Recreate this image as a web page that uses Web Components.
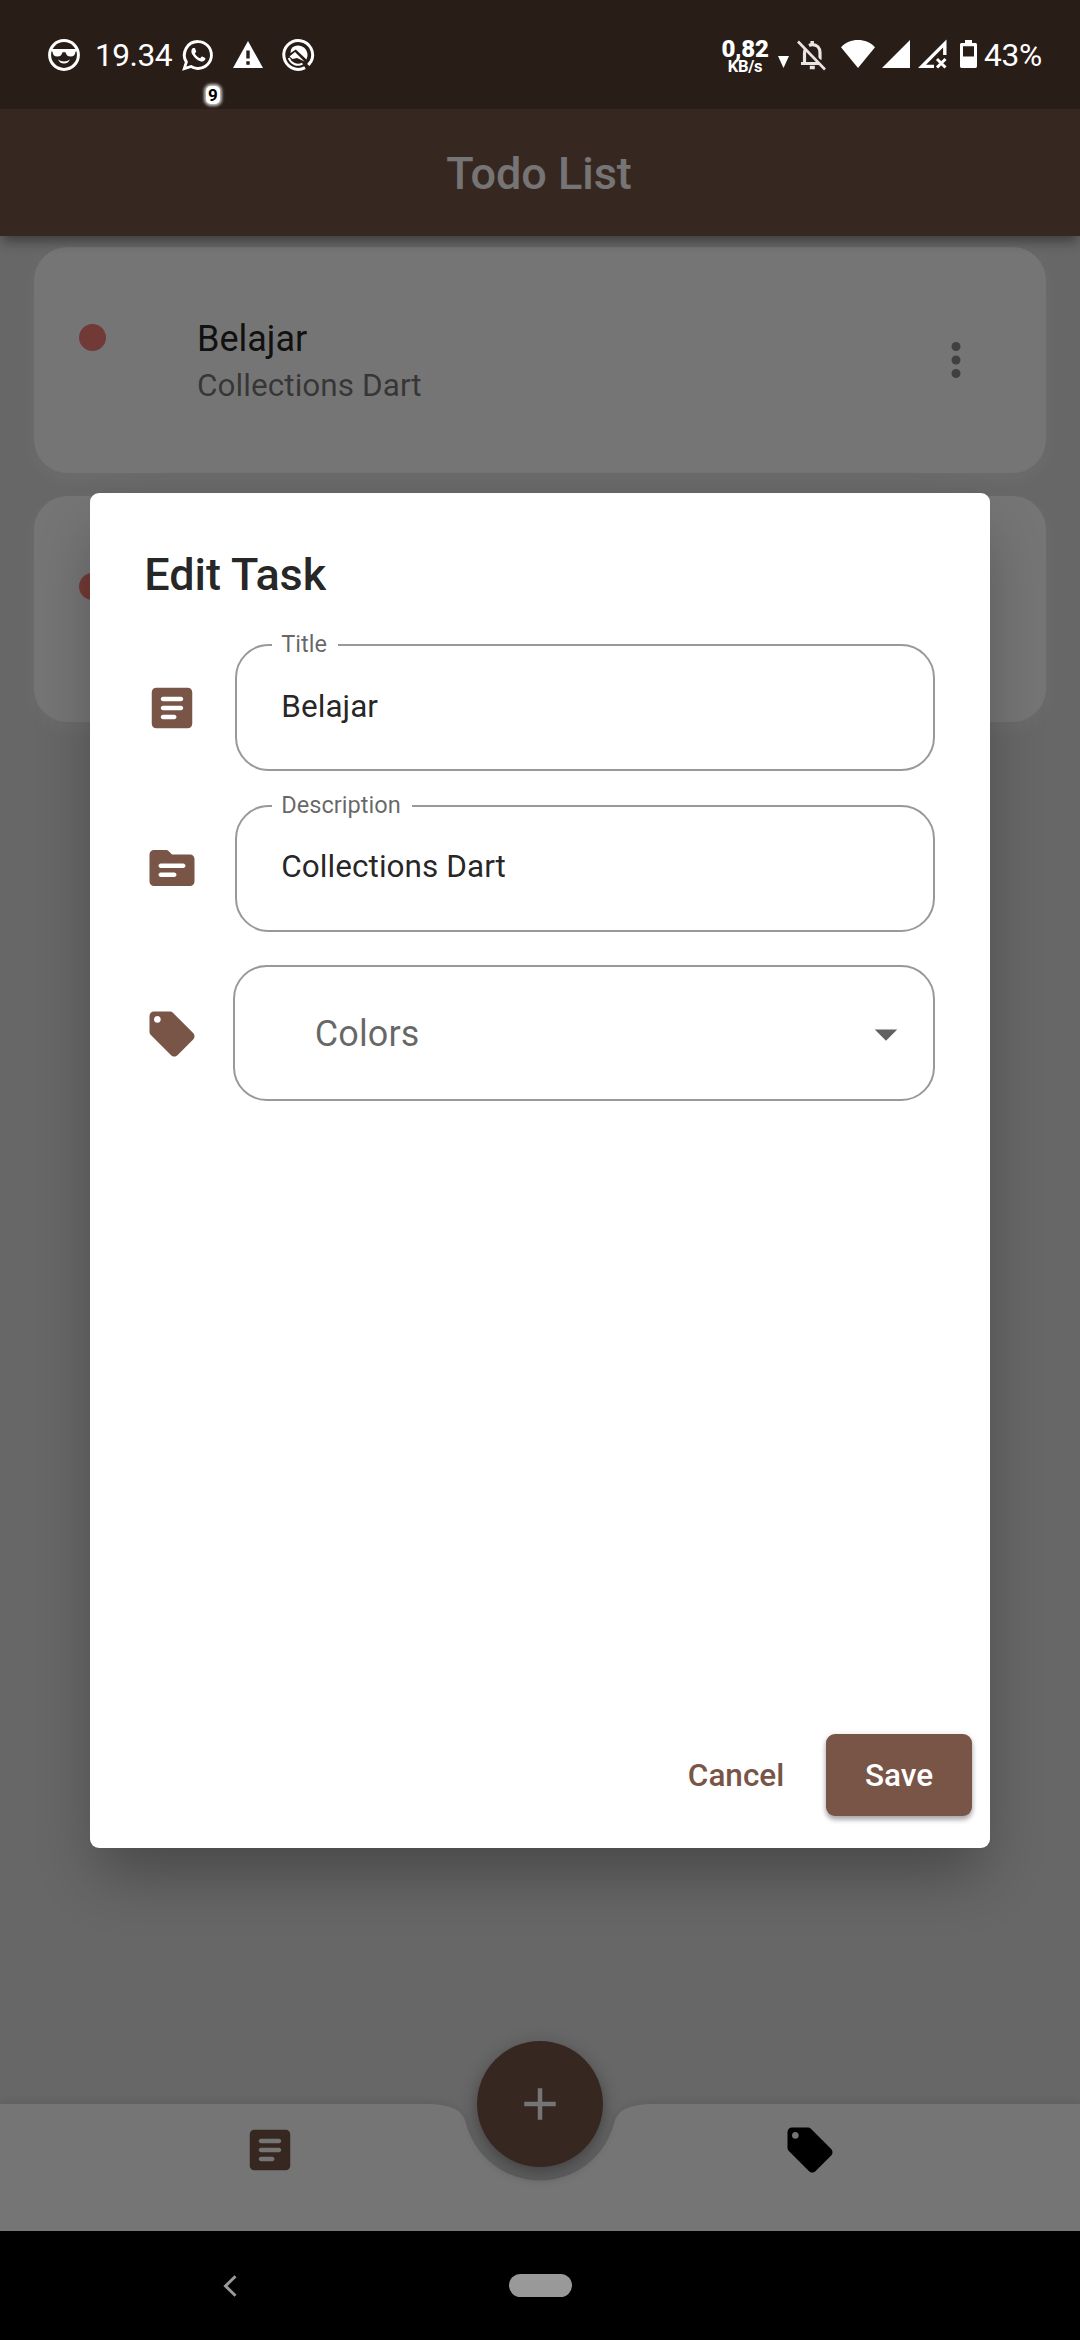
<!DOCTYPE html>
<html lang="id">
<head>
<meta charset="utf-8">
<title>Todo List</title>
<style>
  html, body { margin: 0; padding: 0; }
  body { width: 1080px; height: 2340px; overflow: hidden; font-family: Roboto, "Liberation Sans", sans-serif; background: #000; }
</style>
</head>
<body>
<todo-screen></todo-screen>
<script>
const ICONS = {
  article: '<path fill-rule="evenodd" d="M19 3H5c-1.1 0-2 .9-2 2v14c0 1.1.9 2 2 2h14c1.1 0 2-.9 2-2V5c0-1.1-.9-2-2-2zM13 17H8c-.55 0-1-.45-1-1s.45-1 1-1h5c.55 0 1 .45 1 1s-.45 1-1 1zM16 13H8c-.55 0-1-.45-1-1s.45-1 1-1h8c.55 0 1 .45 1 1s-.45 1-1 1zM16 9H8c-.55 0-1-.45-1-1s.45-1 1-1h8c.55 0 1 .45 1 1s-.45 1-1 1z"/>',
  topic: '<path fill-rule="evenodd" d="M20 6h-8l-1.41-1.41C10.21 4.21 9.7 4 9.17 4H4c-1.1 0-2 .9-2 2v12c0 1.1.9 2 2 2h16c1.1 0 2-.9 2-2V8c0-1.1-.9-2-2-2zM13 16H7c-.55 0-1-.45-1-1s.45-1 1-1h6c.55 0 1 .45 1 1s-.45 1-1 1zM17 12H7c-.55 0-1-.45-1-1s.45-1 1-1h10c.55 0 1 .45 1 1s-.45 1-1 1z"/>',
  sell: '<path fill-rule="evenodd" d="M21.41 11.58l-9-9C12.05 2.22 11.55 2 11 2H4c-1.1 0-2 .9-2 2v7c0 .55.22 1.05.59 1.42l9 9c.36.36.86.58 1.41.58s1.05-.22 1.41-.59l7-7c.37-.36.59-.86.59-1.41s-.23-1.06-.59-1.42zM5.5 7C4.67 7 4 6.33 4 5.5S4.67 4 5.5 4 7 4.67 7 5.5 6.33 7 5.5 7z"/>',
  more: '<circle cx="12" cy="6" r="2"/><circle cx="12" cy="12" r="2"/><circle cx="12" cy="18" r="2"/>',
  add: '<path d="M19 13h-6v6h-2v-6H5v-2h6V5h2v6h6z"/>',
  drop: '<path d="M7 10l5 5 5-5z"/>'
};

function define(name, html) {
  const t = document.createElement('template');
  t.innerHTML = html;
  customElements.define(name, class extends HTMLElement {
    constructor() {
      super();
      this.attachShadow({ mode: 'open' }).append(t.content.cloneNode(true));
    }
  });
}

customElements.define('md-icon', class extends HTMLElement {
  connectedCallback() {
    const root = this.shadowRoot || this.attachShadow({ mode: 'open' });
    root.innerHTML = `<style>:host{display:block;width:54px;height:54px;flex:none}svg{display:block;width:100%;height:100%;fill:currentColor}</style>
      <svg viewBox="0 0 24 24">${ICONS[this.getAttribute('name')]}</svg>`;
  }
});

define('status-bar', `
<style>
  :host { display: flex; justify-content: space-between; height: 109px; background: rgba(0,0,0,.25); color: #fff; box-sizing: border-box; padding: 0 38px 0 48px; }
  .side { display: flex; height: 109px; }
  svg { display: block; flex: none; overflow: visible; }
  .txt { font-size: 31.700px; line-height: 38px; margin-top: 37px; white-space: nowrap; letter-spacing: -.5px; }
  .rate { display: flex; flex-direction: column; align-items: center; font-weight: 700; margin-top: 39px; width: 48px; }
  .rate b { font-size: 24px; line-height: 20px; letter-spacing: -.3px; }
  .rate i { font-style: normal; font-size: 16.500px; line-height: 13px; margin-top: 1px; letter-spacing: -.3px; }
  .wa { display: flex; flex-direction: column; width: 34px; }
  .badge { align-self: flex-end; margin: 14px -5px 0 0; width: 14px; height: 18px; border-radius: 5px; background: #fff; color: #000; font-weight: 700; font-size: 17px; line-height: 19px; text-align: center; box-shadow: 0 0 3px 2px rgba(255,255,255,.75); }
</style>
<div class="side">
  <svg width="32" height="32" viewBox="0 0 32 32" style="margin-top:39px">
    <circle cx="16" cy="16" r="14.4" fill="none" stroke="#fff" stroke-width="3"/>
    <path d="M3 10h26l-1.6 3.2c-.4 3.2-1.900 4.300-4.600 4.300-3.300 0-4.600-1.600-5.300-4.300h-3c-.7 2.700-2 4.300-5.300 4.300-2.700 0-4.200-1.100-4.600-4.300z" fill="#fff"/>
    <path d="M10 20.300c3.500 2.900 8.500 2.900 12 0-.9 2.800-3.100 4.200-6 4.200s-5.100-1.400-6-4.200z" fill="#fff"/>
  </svg>
  <span class="txt" style="margin-left:15px;width:76px">19.34</span>
  <div class="wa" style="margin-left:10px">
    <svg width="34" height="34" viewBox="0 0 24 24" style="margin-top:38px"><path fill="#fff" d="M16.750 13.960c.25.130.41.200.46.300.06.110.04.610-.21 1.180-.2.560-1.240 1.100-1.700 1.120-.46.020-.47.360-2.960-.73-2.490-1.090-3.990-3.750-4.110-3.920-.12-.17-.96-1.380-.92-2.610.05-1.220.69-1.800.95-2.040.24-.26.510-.29.680-.26h.47c.15 0 .36-.06.55.450l.69 1.870c.06.130.1.280.010.44l-.27.41-.39.42c-.12.120-.26.250-.12.500.12.260.62 1.090 1.320 1.780.91.880 1.710 1.170 1.950 1.300.24.140.39.120.540-.04l.81-.94c.19-.25.350-.19.580-.11l1.670.880M12 1.500a10.500 10.500 0 0 1 0 21c-1.800 0-3.500-.46-5-1.260L.8 23.100l1.900-5.900A10.500 10.500 0 0 1 12 1.500m0 2a8.500 8.500 0 0 0-7.100 13.200L3.800 20.200l3.500-1.100A8.500 8.500 0 1 0 12 3.500z"/></svg>
    <span class="badge">9</span>
  </div>
  <svg width="30" height="27" viewBox="0 0 30 27" style="margin:41px 0 0 18px"><path fill="#fff" fill-rule="evenodd" d="M15 0l15 27H0zM13.300 9.500v8h3.400v-8zM13.300 20.300v3.400h3.400v-3.400z"/></svg>
  <svg width="32" height="32" viewBox="0 0 32 32" style="margin:39px 0 0 19px">
    <path fill="none" stroke="#fff" stroke-width="3" d="M23 28.600A14.400 14.400 0 1 1 29 22.500L26.300 26"/>
    <path fill="none" stroke="#fff" stroke-width="2" d="M20.500 24.600A9.700 9.700 0 0 1 6.800 19"/>
    <path fill="#fff" d="M10.500 8.200A9.600 9.600 0 0 1 24.500 20.500L13.800 10.500 8.500 14c.2-2.500.6-4.200 2-5.800z"/>
    <path fill="#fff" d="M7.500 17.500l5.500-4.500 9.500 9.500-7.500-3.500-4.500 1z"/>
  </svg>
</div>
<div class="side">
  <div class="rate"><b>0,82</b><i>KB/s</i></div>
  <svg width="11" height="12" viewBox="0 0 11 12" style="margin:56px 0 0 9px"><path fill="#fff" d="M0 0h11L5.500 12z"/></svg>
  <svg width="30" height="30" viewBox="0 0 30 30" style="margin:40px 0 0 8px" fill="none" stroke="#e9e5e4">
    <path stroke-width="3.200" d="M4 23.500h21M7.500 23V13c0-2 .6-3.500 1.600-4.800M12 5.500c1-.5 2-.8 3.300-.8 4.700 0 7.700 3.300 7.700 8v7"/>
    <path stroke-width="3.500" d="M15.200 1v4M12.800 27.500h5"/><path stroke="#2a1d19" stroke-width="3" d="M4 1l25 27"/><path stroke-width="2.600" d="M1 1.500l27 28"/>
  </svg>
  <svg width="34" height="28" viewBox="0 0 34 28" style="margin:40px 0 0 14px"><path fill="#fff" d="M17 28L0 7.200C4.500 2.500 10.500 0 17 0s12.500 2.500 17 7.200z"/></svg>
  <svg width="28" height="28" viewBox="0 0 28 28" style="margin:39.500px 0 0 7px"><path fill="#fff" d="M28 0v28H0z"/></svg>
  <svg width="29" height="28" viewBox="0 0 29 28" style="margin:39.500px 0 0 8px"><path fill="#fff" fill-rule="evenodd" d="M28.500-.5V15h-3.400V7.500L8 24.700h8V28H0z"/><path stroke="#fff" stroke-width="3" d="M19 19l8.500 8.500M27.500 19L19 27.500"/></svg>
  <svg width="17" height="28" viewBox="0 0 17 28" style="margin:40px 0 0 13px"><path fill="#fff" fill-rule="evenodd" d="M5 0h7v3h3.300c1 0 1.700.7 1.700 1.700v21.600c0 1-.7 1.700-1.700 1.700H1.700C.7 28 0 27.300 0 26.300V4.700C0 3.700.7 3 1.700 3H5zM3 6.300v10.200h11V6.300z"/></svg>
  <span class="txt" style="margin-left:7px;width:58px;letter-spacing:-.3px">43%</span>
</div>`);

define('app-bar', `
<style>
  :host { display: flex; align-items: center; justify-content: center; height: 235.500px; padding: 112px 2px 0 0; box-sizing: border-box; background: #795548; color: #fff; font-weight: 500; font-size: 45px; letter-spacing: -.05px; box-shadow: 0 7px 12px -2px rgba(0,0,0,.42); position: relative; z-index: 1; }
</style><slot></slot>`);

define('task-card', `
<style>
  :host { display: flex; align-items: flex-start; height: 226px; box-sizing: border-box; margin: 0 34px; border-radius: 33.750px; background: #fff; box-shadow: 0 6px 18px rgba(255,255,255,.4); padding: 0 63.500px 0 45px; }
  .dot { width: 27px; height: 27px; border-radius: 50%; background: #f44336; opacity: .68; margin-top: 76.500px; }
  .text { flex: 1; margin: 68px 0 0 91px; display: flex; flex-direction: column; }
  .t { font-size: 36px; line-height: 48px; color: rgba(0,0,0,.87); }
  .s { font-size: 31.500px; line-height: 46px; color: rgba(0,0,0,.54); letter-spacing: .05px; }
  md-icon { margin-top: 86px; color: rgba(0,0,0,.45); }
</style>
<span class="dot"></span>
<div class="text"><span class="t"><slot name="title"></slot></span><span class="s"><slot></slot></span></div>
<md-icon name="more"></md-icon>`);

define('bottom-bar', `
<style>
  :host { display: grid; height: 127px; position: relative; }
  .shape { grid-area: 1/1; display: block; width: 1080px; height: 127px; overflow: visible; filter: drop-shadow(0 -1px 4px rgba(0,0,0,.1)); }
  .items { grid-area: 1/1; position: relative; display: grid; grid-template-columns: 1fr 1fr; justify-items: center; padding-top: 18.500px; }
  .fab { position: absolute; left: 477px; top: -63px; width: 126px; height: 126px; border-radius: 50%; background: #795548; color: #fff; display: grid; place-items: center; box-shadow: 0 8px 16px rgba(0,0,0,.28), 0 2px 20px rgba(0,0,0,.12); }
</style>
<svg class="shape" viewBox="0 0 1080 127"><path fill="#fff" d="M0 0H427.500Q461.250 0 465.700 18.200A76.500 76.500 0 0 0 614.300 18.200Q618.750 0 652.500 0H1080V127H0z"/></svg>
<div class="items"><md-icon name="article" style="color:#795548"></md-icon><md-icon name="sell" style="color:#000"></md-icon></div>
<div class="fab"><md-icon name="add"></md-icon></div>`);

define('system-nav', `
<style>
  :host { display: grid; grid-template-columns: 1fr auto 1fr; align-items: center; height: 109px; background: #000; }
  svg { display: block; margin-left: 223px; }
  .pill { width: 63px; height: 23px; border-radius: 11.500px; background: #999; }
</style>
<svg width="14" height="22" viewBox="0 0 14 22"><path d="M12.500 1.200L2.500 11l10 9.800" fill="none" stroke="#999" stroke-width="3"/></svg>
<span class="pill"></span><span></span>`);

define('form-row', `
<style>
  :host { display: flex; align-items: flex-end; padding: 0 54.500px 0 55px; }
  .f { flex: 1; margin-left: var(--gap, 36px); }
</style><slot name="icon"></slot><div class="f"><slot></slot></div>`);

define('outlined-field', `
<style>
  :host { display: block; }
  fieldset { margin: 0; padding: 0; height: 139px; box-sizing: border-box; border: 2px solid #999; border-radius: 33.750px; min-width: 0; }
  legend { margin-left: 35px; padding: 0 11px 0 9px; height: 26px; font-size: 23.600px; line-height: 25px; color: rgba(0,0,0,.6); }
  .v { font-size: 31.500px; line-height: 54px; padding: var(--value-top, 21.500px) 0 0 44px; color: rgba(0,0,0,.87); letter-spacing: .05px; }
</style>
<fieldset><legend><slot name="label"></slot></legend><div class="v"><slot></slot></div></fieldset>`);

define('outlined-select', `
<style>
  :host { display: flex; align-items: center; height: 136px; box-sizing: border-box; border: 2px solid #999; border-radius: 33.750px; padding: 0 20px 0 79.500px; font-size: 36px; letter-spacing: .1px; color: rgba(0,0,0,.6); }
  span { flex: 1; padding-top: 2px; }
  md-icon { color: #616161; margin-top: 1px; }
</style><span><slot></slot></span><md-icon name="drop"></md-icon>`);

define('flat-button', `
<style>
  :host { display: flex; align-items: center; justify-content: center; height: 82px; font-weight: 500; font-size: 31.500px; color: #795548; }
  :host([raised]) { width: 145.500px; background: #795548; color: #fff; border-radius: 9px; box-shadow: 0 4px 5px rgba(0,0,0,.28), 0 1px 6px rgba(0,0,0,.14); }
</style><slot></slot>`);

define('edit-dialog', `
<style>
  :host { display: flex; flex-direction: column; width: 899.500px; height: 1355px; box-sizing: border-box; background: #fff; border-radius: 9px; padding-top: 54px; box-shadow: 0 34px 60px -8px rgba(0,0,0,.3); }
  h1 { margin: 0; padding-left: 54px; font-weight: 500; font-size: 45px; line-height: 56px; letter-spacing: -.05px; color: rgba(0,0,0,.87); }
  md-icon { color: #795548; }
  .actions { margin-top: auto; display: flex; justify-content: flex-end; padding: 0 18px 31.500px; gap: 42px; }
</style>
<h1>Edit Task</h1>
<form-row style="margin-top:29.500px"><md-icon slot="icon" name="article" style="margin-bottom:36px"></md-icon><outlined-field><span slot="label">Title</span>Belajar</outlined-field></form-row>
<form-row style="margin-top:22px;--value-top:20.500px"><md-icon slot="icon" name="topic" style="margin-bottom:37px"></md-icon><outlined-field><span slot="label">Description</span>Collections Dart</outlined-field></form-row>
<form-row style="margin-top:33px;--gap:34px"><md-icon slot="icon" name="sell" style="margin-bottom:40.500px"></md-icon><outlined-select>Colors</outlined-select></form-row>
<div class="actions"><flat-button>Cancel</flat-button><flat-button raised>Save</flat-button></div>`);

define('todo-screen', `
<style>
  :host { display: grid; width: 1080px; height: 2340px; overflow: hidden; font-family: Roboto, "Liberation Sans", sans-serif; grid-template: 2340px / 1080px; }
  .app, .scrim, .modal, .system { grid-area: 1/1; }
  .app { display: flex; flex-direction: column; height: 2231px; background: #e0e0e0; position: relative; }
  .list { flex: 1; display: flex; flex-direction: column; gap: 23px; padding-top: 11.500px; }
  .scrim { background: rgba(0,0,0,.54); position: relative; z-index: 2; }
  .modal { display: grid; justify-items: center; align-content: start; padding-top: 492.500px; position: relative; z-index: 3; }
  .system { display: flex; flex-direction: column; justify-content: space-between; position: relative; z-index: 4; }
</style>
<div class="app">
  <app-bar>Todo List</app-bar>
  <div class="list">
    <task-card><span slot="title">Belajar</span>Collections Dart</task-card>
    <task-card></task-card>
  </div>
  <bottom-bar></bottom-bar>
</div>
<div class="scrim"></div>
<div class="modal"><edit-dialog></edit-dialog></div>
<div class="system"><status-bar></status-bar><system-nav></system-nav></div>`);
</script>
</body>
</html>
